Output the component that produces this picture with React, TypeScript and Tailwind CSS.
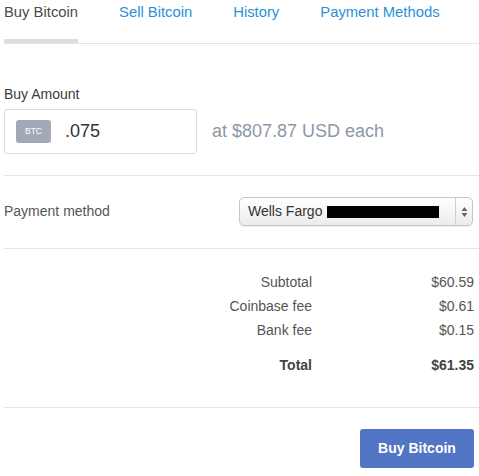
import React from 'react';

const font = { fontFamily: '"Liberation Sans", Arial, Helvetica, sans-serif' };

const Tab = ({ label, active }: { label: string; active?: boolean }) => (
  <div
    className={`pt-[4px] pb-[18px] leading-[17px] text-[14.8px] border-b-[4px] ${
      active ? 'border-[#dddddd] text-[#4a4a4a]' : 'border-transparent text-[#2b8fd8]'
    }`}
  >
    {label}
  </div>
);

const SummaryRow = ({ label, value, bold }: { label: string; value: string; bold?: boolean }) => (
  <>
    <div className={`text-right ${bold ? 'font-bold text-[#444]' : ''}`}>{label}</div>
    <div className={`text-right ${bold ? 'font-bold text-[#444]' : ''}`}>{value}</div>
  </>
);

export default function App() {
  return (
    <div className="w-[479px] h-[476px] bg-white overflow-hidden text-[#555]" style={font}>
      <div className="pl-[4px]">
        {/* tabs */}
        <div className="flex gap-[41px] border-b border-[#e4e4e4]">
          <Tab label="Buy Bitcoin" active />
          <Tab label="Sell Bitcoin" />
          <Tab label="History" />
          <Tab label="Payment Methods" />
        </div>

        {/* amount */}
        <div className="pt-[42px] pb-[21px] border-b border-[#e4e4e4]">
          <div className="text-[14px] leading-[17px] text-[#3a3a3a]">Buy Amount</div>
          <div className="mt-[6px] flex items-center">
            <div className="w-[193px] h-[45px] border border-[#dcdcdc] rounded-[3px] flex items-center pl-[11px]">
              <div className="w-[35px] h-[23px] rounded-[3px] bg-[#a3aab7] text-white text-[8.5px] flex items-center justify-center">
                BTC
              </div>
              <div className="ml-[14px] text-[18px] text-[#333]">.075</div>
            </div>
            <div className="ml-[15px] text-[18px] text-[#8e97a8]">at $807.87 USD each</div>
          </div>
        </div>

        {/* payment method */}
        <div className="flex items-center justify-between pt-[21px] pb-[22px] pr-[6px] border-b border-[#e4e4e4]">
          <div className="text-[14px] text-[#555]">Payment method</div>
          <div className="w-[234px] h-[29px] rounded-[5px] border border-[#c6c6c6] bg-gradient-to-b from-white to-[#ececec] shadow-[0_1px_1px_rgba(0,0,0,0.08)] flex items-center">
            <div className="flex-1 flex items-center pl-[8px] text-[14px] text-[#333]">
              Wells Fargo
              <div className="ml-[5px] w-[112px] h-[12px] bg-black" />
            </div>
            <div className="w-[17px] h-full border-l border-[#d0d0d0] flex items-center justify-center">
              <svg width="7" height="12" viewBox="0 0 7 12">
                <path d="M3.5 1 L6.5 5 L0.5 5 Z" fill="#666" />
                <path d="M3.5 11 L6.5 7 L0.5 7 Z" fill="#666" />
              </svg>
            </div>
          </div>
        </div>

        {/* summary */}
        <div className="pt-[21px] pb-[30px] pr-[5px] border-b border-[#e4e4e4]">
          <div className="grid grid-cols-[308px_1fr] text-[14px] leading-[24px] text-[#555]">
            <SummaryRow label="Subtotal" value="$60.59" />
            <SummaryRow label="Coinbase fee" value="$0.61" />
            <SummaryRow label="Bank fee" value="$0.15" />
          </div>
          <div className="grid grid-cols-[308px_1fr] text-[14px] leading-[24px] mt-[11px]">
            <SummaryRow label="Total" value="$61.35" bold />
          </div>
        </div>

        {/* action */}
        <div className="flex justify-end pt-[21px] pr-[5px]">
          <button className="w-[114px] h-[39px] rounded-[3px] bg-[#5375c6] text-white font-bold text-[14px]">
            Buy Bitcoin
          </button>
        </div>
      </div>
    </div>
  );
}
